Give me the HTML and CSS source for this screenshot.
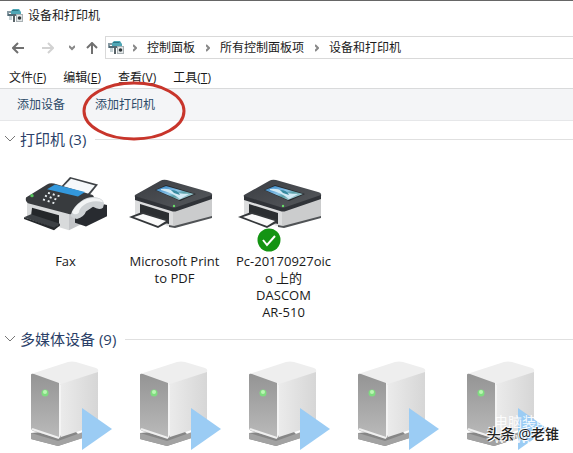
FILE: index.html
```html
<!DOCTYPE html>
<html lang="zh-CN">
<head>
  <meta charset="UTF-8" />
  <meta name="viewport" content="width=device-width, initial-scale=1.0"/>
  <title>设备和打印机</title>
  <link rel="stylesheet" href="styles.css">
</head>
<body>
  <svg class="defs" width="0" height="0">
    <defs>
      <linearGradient id="front" x1="0" y1="0" x2="0" y2="1">
        <stop offset="0" stop-color="#949494"/><stop offset="1" stop-color="#bababa"/>
      </linearGradient>
      <linearGradient id="side" x1="0" y1="0" x2="1" y2="0">
        <stop offset="0" stop-color="#ececec"/><stop offset="1" stop-color="#d6d6d6"/>
      </linearGradient>
      <linearGradient id="lid" x1="0" y1="0" x2="1" y2="1">
        <stop offset="0" stop-color="#3a3d42"/><stop offset="1" stop-color="#56595d"/>
      </linearGradient>
      <linearGradient id="photo" x1="0" y1="0" x2="1" y2="1">
        <stop offset="0" stop-color="#2b7fc4"/><stop offset=".45" stop-color="#8cc4e6"/><stop offset=".6" stop-color="#5aa0a8"/><stop offset="1" stop-color="#e4f3fa"/>
      </linearGradient>
    </defs>
    <symbol id="devices" viewBox="0 0 16 14">
      <path d="M4 2l2-2h6l2 3v3H4z" fill="#4fa6b5"/>
      <path d="M5 1h6l1 1H5z" fill="#2d7485"/>
      <path d="M0 2h4v2H2v3H0z" fill="#8799a2"/>
      <path d="M1 5h9v2H1z" fill="#526a75"/>
      <path d="M2 7h3v4H2z" fill="#c5d2d6"/>
      <path d="M6 6h2v7H6z" fill="#5a6469"/>
      <path d="M9 5h7v8H9z" fill="#a9b1b4"/>
      <path d="M10 6h5v6h-5z" fill="#e4e8e9"/>
      <circle cx="12.5" cy="9" r="1.8" fill="#31383b"/>
    </symbol>
    <symbol id="printer" viewBox="0 0 84 50">
      <path d="M6 18L44 30v18l-5-1-33-11z" fill="#dcddde"/>
      <path d="M44 30l39-12v20L47 48l-3-1z" fill="#cbcccd"/>
      <path d="M40 46l5 1 38-10v2L46 49l-6-1z" fill="#505356"/>
      <path d="M11 25l29 9v11l-29-8z" fill="#2b2e31"/>
      <path d="M6 16L31 2q3-2 7-1l42 12q4 1 3 4L48 29q-3 1-6 0L7 18q-2 0-1-2z" fill="url(#lid)"/>
      <path d="M6 17l36 11q3 1 6 0l35-12v4L48 32q-3 1-6 0L6 21z" fill="#303338"/>
      <path d="M26 11l11-5 30 9-16 7z" fill="#25282b"/>
      <path d="M27 11l10-4 28 8-15 6z" fill="url(#photo)"/>
      <path d="M32 10q7-1 12 2t16 3l-9 5q-7-6-19-9z" fill="#d2eaf5"/>
      <path d="M42 11q7 0 9 5l-6-2z" fill="#388aa0"/>
      <path d="M0 38l13-5 27 8v2l-11 6z" fill="#34373a"/>
      <path d="M5 38l9-3 23 7-8 5z" fill="#fafafa"/>
      <circle cx="45" cy="27" r="1.2" fill="#69dd69"/>
    </symbol>
    <symbol id="fax" viewBox="0 0 84 60" preserveAspectRatio="none">
      <path d="M35 14L47 0l28 8-12 16z" fill="#3f4347"/>
      <path d="M37 14L48 2l24 7-11 14z" fill="#f5f8fa"/>
      <path d="M4 27l42 11v19L4 43z" fill="#d8dadb"/>
      <path d="M46 38l23-12v19L46 57z" fill="#c3c5c8"/>
      <path d="M3 22L24 8q3-2 7-1l38 12q3 1 1 5L52 38q-4 3-8 1L5 28q-3-2-2-6z" fill="#383b3e"/>
      <path d="M24 13l8-5 30 8-7 5z" fill="#3398dc"/>
      <path d="M22 20l14 5M20 24l14 5M25 17l13 4" stroke="#e9eff1" stroke-width="2" stroke-dasharray="2 3" fill="none"/>
      <circle cx="9" cy="20" r="1.7" fill="#55c45c"/>
      <path d="M9 33l27 8v11L8 42z" fill="#24272a"/>
      <path d="M1 43l7-3 29 10-6 5z" fill="#3d4145"/>
      <path d="M1 43v2l30 12 6-5v-2l-6 4z" fill="#25282b"/>
      <path d="M52 40l24-12 8 2v12L63 53l-11-4z" fill="#282b30"/>
      <path d="M48 40q2-8 10-14t16-4q7 2 7 7l-1 4q-4 3-10-1l-7 5q-2 6-9 8-7-1-6-5z" fill="#cdd1d4"/>
      <path d="M49 38q3-7 10-12t16-3q4 1 5 4-11-3-19 3-5 4-5 8-4 4-7 0z" fill="#f2f4f5"/>
    </symbol>
    <symbol id="server" viewBox="0 0 84 92">
      <path d="M1 73l42-4 9 9-24 8L1 79z" fill="#868686"/>
      <path d="M1 73l27 8 25-9v6L28 86 1 79z" fill="#a2a2a2"/>
      <path d="M29 22L68 11v54L31 77z" fill="url(#side)"/>
      <path d="M1 14L38 2q4-1 8 0l20 6q3 1 2 4L31 24 1 16z" fill="#eeeeee"/>
      <path d="M1 15q0-2 3-1l25 9q2 1 2 3v49q0 4-3 3L3 71q-2-1-2-3z" fill="url(#front)"/>
      <path d="M29 22q2 1 2 3v50l-2 3z" fill="#f4f4f4"/>
      <path d="M2 69l27 9" stroke="#f0f0f0" stroke-width="2"/>
      <circle cx="15" cy="33" r="3.5" fill="#7fdc80"/>
      <circle cx="15" cy="32" r="2" fill="#baf6b2"/>
      <path d="M52 48v42l30-21z" fill="#9bccf4"/>
    </symbol>
  </svg>

  <header class="titlebar">
    <svg class="devices-icon"><use href="#devices"/></svg>
    <span>设备和打印机</span>
  </header>

  <nav class="navbar">
    <div class="arrows">
      <button type="button" aria-label="后退"><svg width="12" height="12" viewBox="0 0 12 12"><path d="M12 6H1M6 1L1 6l5 5" stroke="#707070"/></svg></button>
      <button type="button" aria-label="前进"><svg width="12" height="12" viewBox="0 0 12 12"><path d="M0 6h11M6 1l5 5-5 5" stroke="#d2d2d2"/></svg></button>
      <button type="button" aria-label="最近"><svg width="6" height="6" viewBox="0 0 6 6"><path d="M0 1l3 3 3-3" stroke="#888"/></svg></button>
      <button type="button" aria-label="向上"><svg width="12" height="12" viewBox="0 0 12 12"><path d="M6 12V1M1 6l5-5 5 5" stroke="#707070"/></svg></button>
    </div>
    <div class="address">
      <svg class="devices-icon"><use href="#devices"/></svg>
      <svg class="sep" viewBox="0 0 4 8"><path d="M0 1l3 3-3 3"/></svg>
      <a href="#">控制面板</a>
      <svg class="sep" viewBox="0 0 4 8"><path d="M0 1l3 3-3 3"/></svg>
      <a href="#">所有控制面板项</a>
      <svg class="sep" viewBox="0 0 4 8"><path d="M0 1l3 3-3 3"/></svg>
      <a href="#">设备和打印机</a>
    </div>
  </nav>

  <div class="menubar">
    <button type="button">文件(<u>F</u>)</button>
    <button type="button">编辑(<u>E</u>)</button>
    <button type="button">查看(<u>V</u>)</button>
    <button type="button">工具(<u>T</u>)</button>
  </div>

  <div class="toolbar">
    <button type="button">添加设备</button>
    <button type="button" class="marked">添加打印机
      <svg class="ring" viewBox="0 0 104 60"><ellipse cx="52" cy="30" rx="50" ry="28"/></svg>
    </button>
  </div>

  <main>
    <section>
      <h2><svg class="chevron" viewBox="0 0 10 6"><path d="M0 0l5 5 5-5"/></svg>打印机 (3)</h2>
      <ul class="items printers">
        <li><div class="picture fax"><svg><use href="#fax"/></svg></div><span>Fax</span></li>
        <li><div class="picture"><svg><use href="#printer"/></svg></div><span>Microsoft Print<br>to PDF</span></li>
        <li>
          <div class="picture">
            <svg><use href="#printer"/></svg>
            <svg class="badge" viewBox="0 0 24 24"><circle cx="12" cy="12" r="11.5" fill="#149413"/><path d="M6 12l4 5 8-9" fill="none" stroke="#fff" stroke-width="2"/></svg>
          </div>
          <span>Pc-20170927oic<br>o 上的<br>DASCOM<br>AR-510</span>
        </li>
      </ul>
    </section>
    <section>
      <h2><svg class="chevron" viewBox="0 0 10 6"><path d="M0 0l5 5 5-5"/></svg>多媒体设备 (9)</h2>
      <ul class="items media">
        <li><svg><use href="#server"/></svg></li>
        <li><svg><use href="#server"/></svg></li>
        <li><svg><use href="#server"/></svg></li>
        <li><svg><use href="#server"/></svg></li>
        <li><svg><use href="#server"/></svg></li>
      </ul>
    </section>
  </main>

  <div class="site-mark">电脑装配网<br>www.</div>
  <div class="author-mark">头条 @老锥</div>
</body>
</html>
```
FILE: styles.css
```css
* {
  box-sizing: border-box;
}
body {
  margin: 0;
  min-height: 100vh;
  position: relative;
  overflow: hidden;
  background: #fff;
  border-top: 1px solid #666;
  color: #1a1a1a;
  font: 12px/16px "Open Sans", "Noto Sans CJK SC", sans-serif;
}
button {
  padding: 0;
  border: 0;
  background: none;
  color: inherit;
  font: inherit;
  white-space: nowrap;
}
a {
  color: inherit;
  text-decoration: none;
}
.defs {
  position: absolute;
}
.titlebar {
  display: flex;
  align-items: center;
  gap: 5px;
  height: 30px;
  padding-left: 7px;
}
.devices-icon {
  width: 16px;
  height: 14px;
  flex: none;
}
.navbar {
  display: flex;
  align-items: center;
  height: 33px;
}
.arrows {
  display: grid;
  grid-template-columns: 30px 27px 17px 12px;
  align-items: center;
  width: 105px;
  padding-left: 12px;
}
.arrows svg {
  display: block;
  fill: none;
  stroke-width: 2;
}
.address {
  flex: 1;
  display: flex;
  align-items: center;
  height: 23px;
  padding-left: 2px;
  border: 1px solid #d9d9d9;
  border-right: 0;
}
.sep {
  width: 4px;
  height: 8px;
  margin: 0 10px 0 11px;
  fill: none;
  stroke: #888;
  stroke-width: 2;
}
.address .devices-icon + .sep {
  margin-left: 9px;
}
.menubar {
  display: flex;
  align-items: center;
  gap: 17px;
  height: 24px;
  padding: 4px 0 0 9px;
}
.toolbar {
  display: flex;
  align-items: center;
  gap: 30px;
  height: 33px;
  padding-left: 17px;
  background: #f4f5f7;
  border-top: 1px solid #d9dadb;
  border-bottom: 1px solid #e6e7e9;
  color: #2c4a68;
}
.marked {
  position: relative;
}
.ring {
  position: absolute;
  left: -13px;
  top: -16px;
  width: 104px;
  height: 60px;
  fill: none;
  stroke: #c8352b;
  stroke-width: 3;
}
.toolbar button {
  text-align: left;
}
h2 {
  display: flex;
  align-items: center;
  margin: 0;
  padding: 7px 0 0 5px;
  color: #2b3f68;
  font-size: 15px;
  font-weight: normal;
  line-height: 22px;
}
h2::after {
  content: "";
  flex: 1;
  height: 1px;
  margin-left: 9px;
  background: #e0e0e0;
}
.chevron {
  width: 10px;
  height: 6px;
  margin-right: 5px;
  fill: none;
  stroke: #777;
}
.items {
  display: flex;
  margin: 0;
  padding: 0;
  list-style: none;
}
.items li {
  flex: none;
  width: 109px;
}
.printers {
  padding: 27px 0 0 11px;
  text-align: center;
  font-size: 13px;
  line-height: 17px;
}
.picture {
  position: relative;
  height: 76px;
  padding: 2px 8px 0 0;
}
.picture svg {
  width: 84px;
  height: 50px;
}
.picture.fax {
  padding: 0 2px 0 0;
}
.picture.fax svg {
  height: 56px;
}
.picture .badge {
  position: absolute;
  left: 28px;
  top: 51px;
  width: 24px;
  height: 24px;
}
.media {
  padding: 10px 0 0 30px;
}
.media svg {
  display: block;
  width: 84px;
  height: 92px;
}
.site-mark {
  position: absolute;
  right: 9px;
  bottom: 7px;
  color: rgba(255, 255, 255, .9);
  font-size: 14px;
  white-space: nowrap;
}
.author-mark {
  position: absolute;
  right: 14px;
  bottom: 11px;
  color: #222;
  font-size: 14px;
  font-weight: 500;
  text-shadow: 1px 1px #fff, -1px -1px #fff;
}
```
